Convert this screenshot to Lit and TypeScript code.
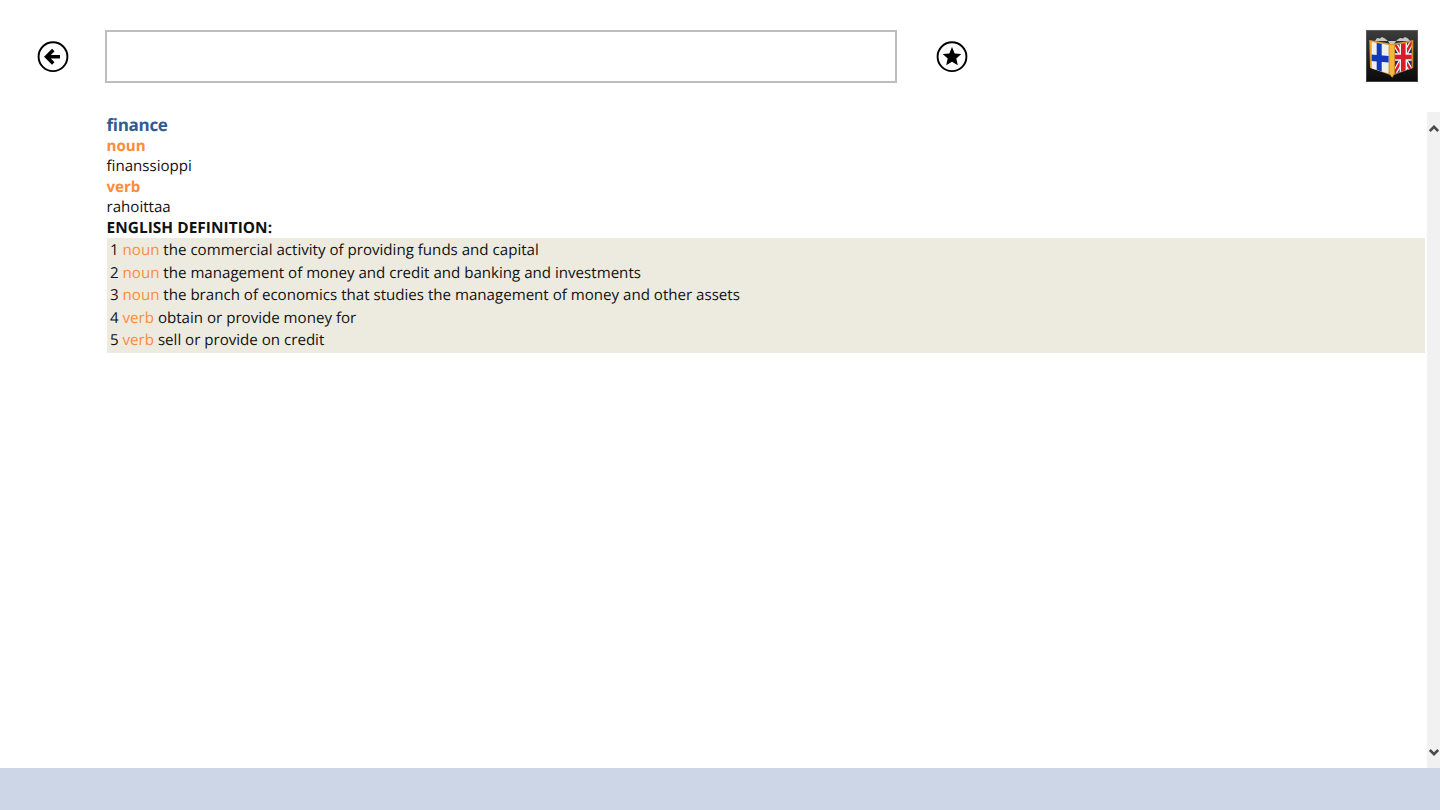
import { LitElement, html, css, svg } from "lit";
import { customElement } from "lit/decorators.js";

const defs = [
  ["noun", "the commercial activity of providing funds and capital"],
  ["noun", "the management of money and credit and banking and investments"],
  ["noun", "the branch of economics that studies the management of money and other assets"],
  ["verb", "obtain or provide money for"],
  ["verb", "sell or provide on credit"],
];

@customElement("app-root")
export class AppRoot extends LitElement {
  static styles = css`
    :host { display: flex; flex-direction: column; width: 1440px; height: 810px; background: #fff; overflow: hidden;
      font-family: "Open Sans", "Noto Sans", sans-serif; color: #111; text-rendering: geometricPrecision; }
    .top { flex: none; height: 112px; box-sizing: border-box; padding: 30px 22px 0 37px; display: flex; align-items: flex-start; }
    .round { flex: none; width: 32px; height: 32px; margin-top: 11px; display: block; }
    .search { flex: none; box-sizing: border-box; width: 792px; height: 53px; margin: 0 39px 0 36px; border: 2px solid #bdbdbd; background: #fff; }
    .logo { flex: none; width: 52px; height: 52px; margin-left: auto; display: block; }
    .mid { flex: 1; min-height: 0; display: flex; }
    .content { flex: 1; min-width: 0; padding: 0 2px 0 107px; font-size: 15.1px; line-height: 20.4px; }
    .indent { margin-left: -0.5px; }
    .word { font-size: 17px; line-height: 22px; padding-top: 2px; font-weight: 700; color: #2f5b94; letter-spacing: -0.3px; }
    .pos { font-weight: 700; color: #fb8c3c; }
    .head { font-weight: 700; color: #111; font-size: 15.4px; letter-spacing: 0.05px; }
    .table { background: #edebe0; padding: 1px 3px 1.5px; }
    .row { height: 22.5px; line-height: 22.5px; white-space: nowrap; }
    .row span { color: #fb8c3c; }
    .bar { flex: none; width: 13px; background: #f1f1f1; display: flex; flex-direction: column; justify-content: space-between; align-items: center; padding: 13px 0 12px; box-sizing: border-box; }
    .bar svg { display: block; width: 10px; height: 7px; }
    .foot { flex: none; height: 42px; background: #ccd6e6; }
  `;

  private chev(d: string) {
    return html`<svg viewBox="0 0 10 7"><path d=${d} fill="none" stroke="#4a4a4a" stroke-width="2.6"></path></svg>`;
  }

  render() {
    return html`
      <div class="top">
        <svg class="round" viewBox="0 0 32 32">
          <circle cx="16" cy="15.7" r="14.4" fill="none" stroke="#000" stroke-width="1.9"></circle>
          <path d="M23 15.7 H10.5 M16.3 9 L9.6 15.7 L16.3 22.4" fill="none" stroke="#000" stroke-width="3.6"></path>
        </svg>
        <div class="search"></div>
        <svg class="round" viewBox="0 0 32 32">
          <circle cx="16" cy="15.7" r="14.4" fill="none" stroke="#000" stroke-width="1.9"></circle>
          <path d="M16 6 L18.7 12.4 L25.3 13 L20.3 17.5 L21.8 24.2 L16 20.7 L10.2 24.2 L11.7 17.5 L6.7 13 L13.3 12.4 Z" fill="#000"></path>
        </svg>
        <svg class="logo" viewBox="0 0 52 52">
          <defs>
            <linearGradient id="bg" x1="0" y1="0" x2="0" y2="1">
              <stop offset="0" stop-color="#3c3c3c"></stop>
              <stop offset="1" stop-color="#0a0a0a"></stop>
            </linearGradient>
            <linearGradient id="gold" x1="0" y1="0" x2="1" y2="1">
              <stop offset="0" stop-color="#e8ab38"></stop>
              <stop offset="1" stop-color="#b87a12"></stop>
            </linearGradient>
            <clipPath id="uk"><path d="M29 15 L45.7 12 V38.5 L29 43.5 Z"></path></clipPath>
            <clipPath id="fi"><path d="M5.7 12 L22.6 15 V43.5 L5.7 38.5 Z"></path></clipPath>
          </defs>
          <rect width="52" height="52" fill="url(#bg)"></rect>
          <rect x=".5" y=".5" width="51" height="51" fill="none" stroke="#777" stroke-opacity=".5"></rect>
          <path d="M9 11 L11 8 L14 8.5 L16 7 L19 8.5 L22 11 L24 14 H28 L31 10 L34 8 L37 8.5 L39 7 L42 8.5 L44 11 Z" fill="#c8c8c8"></path>
          <path d="M3.3 10 L25.7 14 L47.3 10 V37.7 L28 45 L26.3 47.7 L24 45 L4 37.7 Z" fill="url(#gold)"></path>
          ${svg`<g clip-path="url(#fi)">
            <rect x="5" y="11" width="18" height="33" fill="#efefef"></rect>
            <rect x="10.7" y="11" width="5" height="33" fill="#1238bc"></rect>
            <path d="M5 24.5 L23 26 V32.5 L5 31 Z" fill="#1238bc"></path>
          </g>
          <g clip-path="url(#uk)">
            <rect x="29" y="11" width="17" height="33" fill="#1c2c78"></rect>
            <path d="M29 14 L46 42 M46 12 L29 42" stroke="#f2f2f2" stroke-width="5"></path>
            <path d="M29 14 L46 42 M46 12 L29 42" stroke="#d81c2c" stroke-width="2.4"></path>
            <path d="M37.3 11 V44 M29 27 H46" stroke="#f2f2f2" stroke-width="7.4"></path>
            <path d="M37.3 11 V44 M29 27 H46" stroke="#d81c2c" stroke-width="4.6"></path>
          </g>`}
          <path d="M23.6 15 H28 V43.5 L26 47 L23.6 43.5 Z" fill="#eeb93c"></path>
        </svg>
      </div>
      <div class="mid">
        <div class="content">
          <div class="indent word">finance</div>
          <div class="indent pos">noun</div>
          <div class="indent">finanssioppi</div>
          <div class="indent pos">verb</div>
          <div class="indent">rahoittaa</div>
          <div class="indent head">ENGLISH DEFINITION:</div>
          <div class="table">
            ${defs.map((d, i) => html`<div class="row">${i + 1} <span>${d[0]}</span> ${d[1]}</div>`)}
          </div>
        </div>
        <div class="bar">
          ${this.chev("M0.8 6 L5 1.8 L9.2 6")}
          ${this.chev("M0.8 1 L5 5.2 L9.2 1")}
        </div>
      </div>
      <div class="foot"></div>
    `;
  }
}
